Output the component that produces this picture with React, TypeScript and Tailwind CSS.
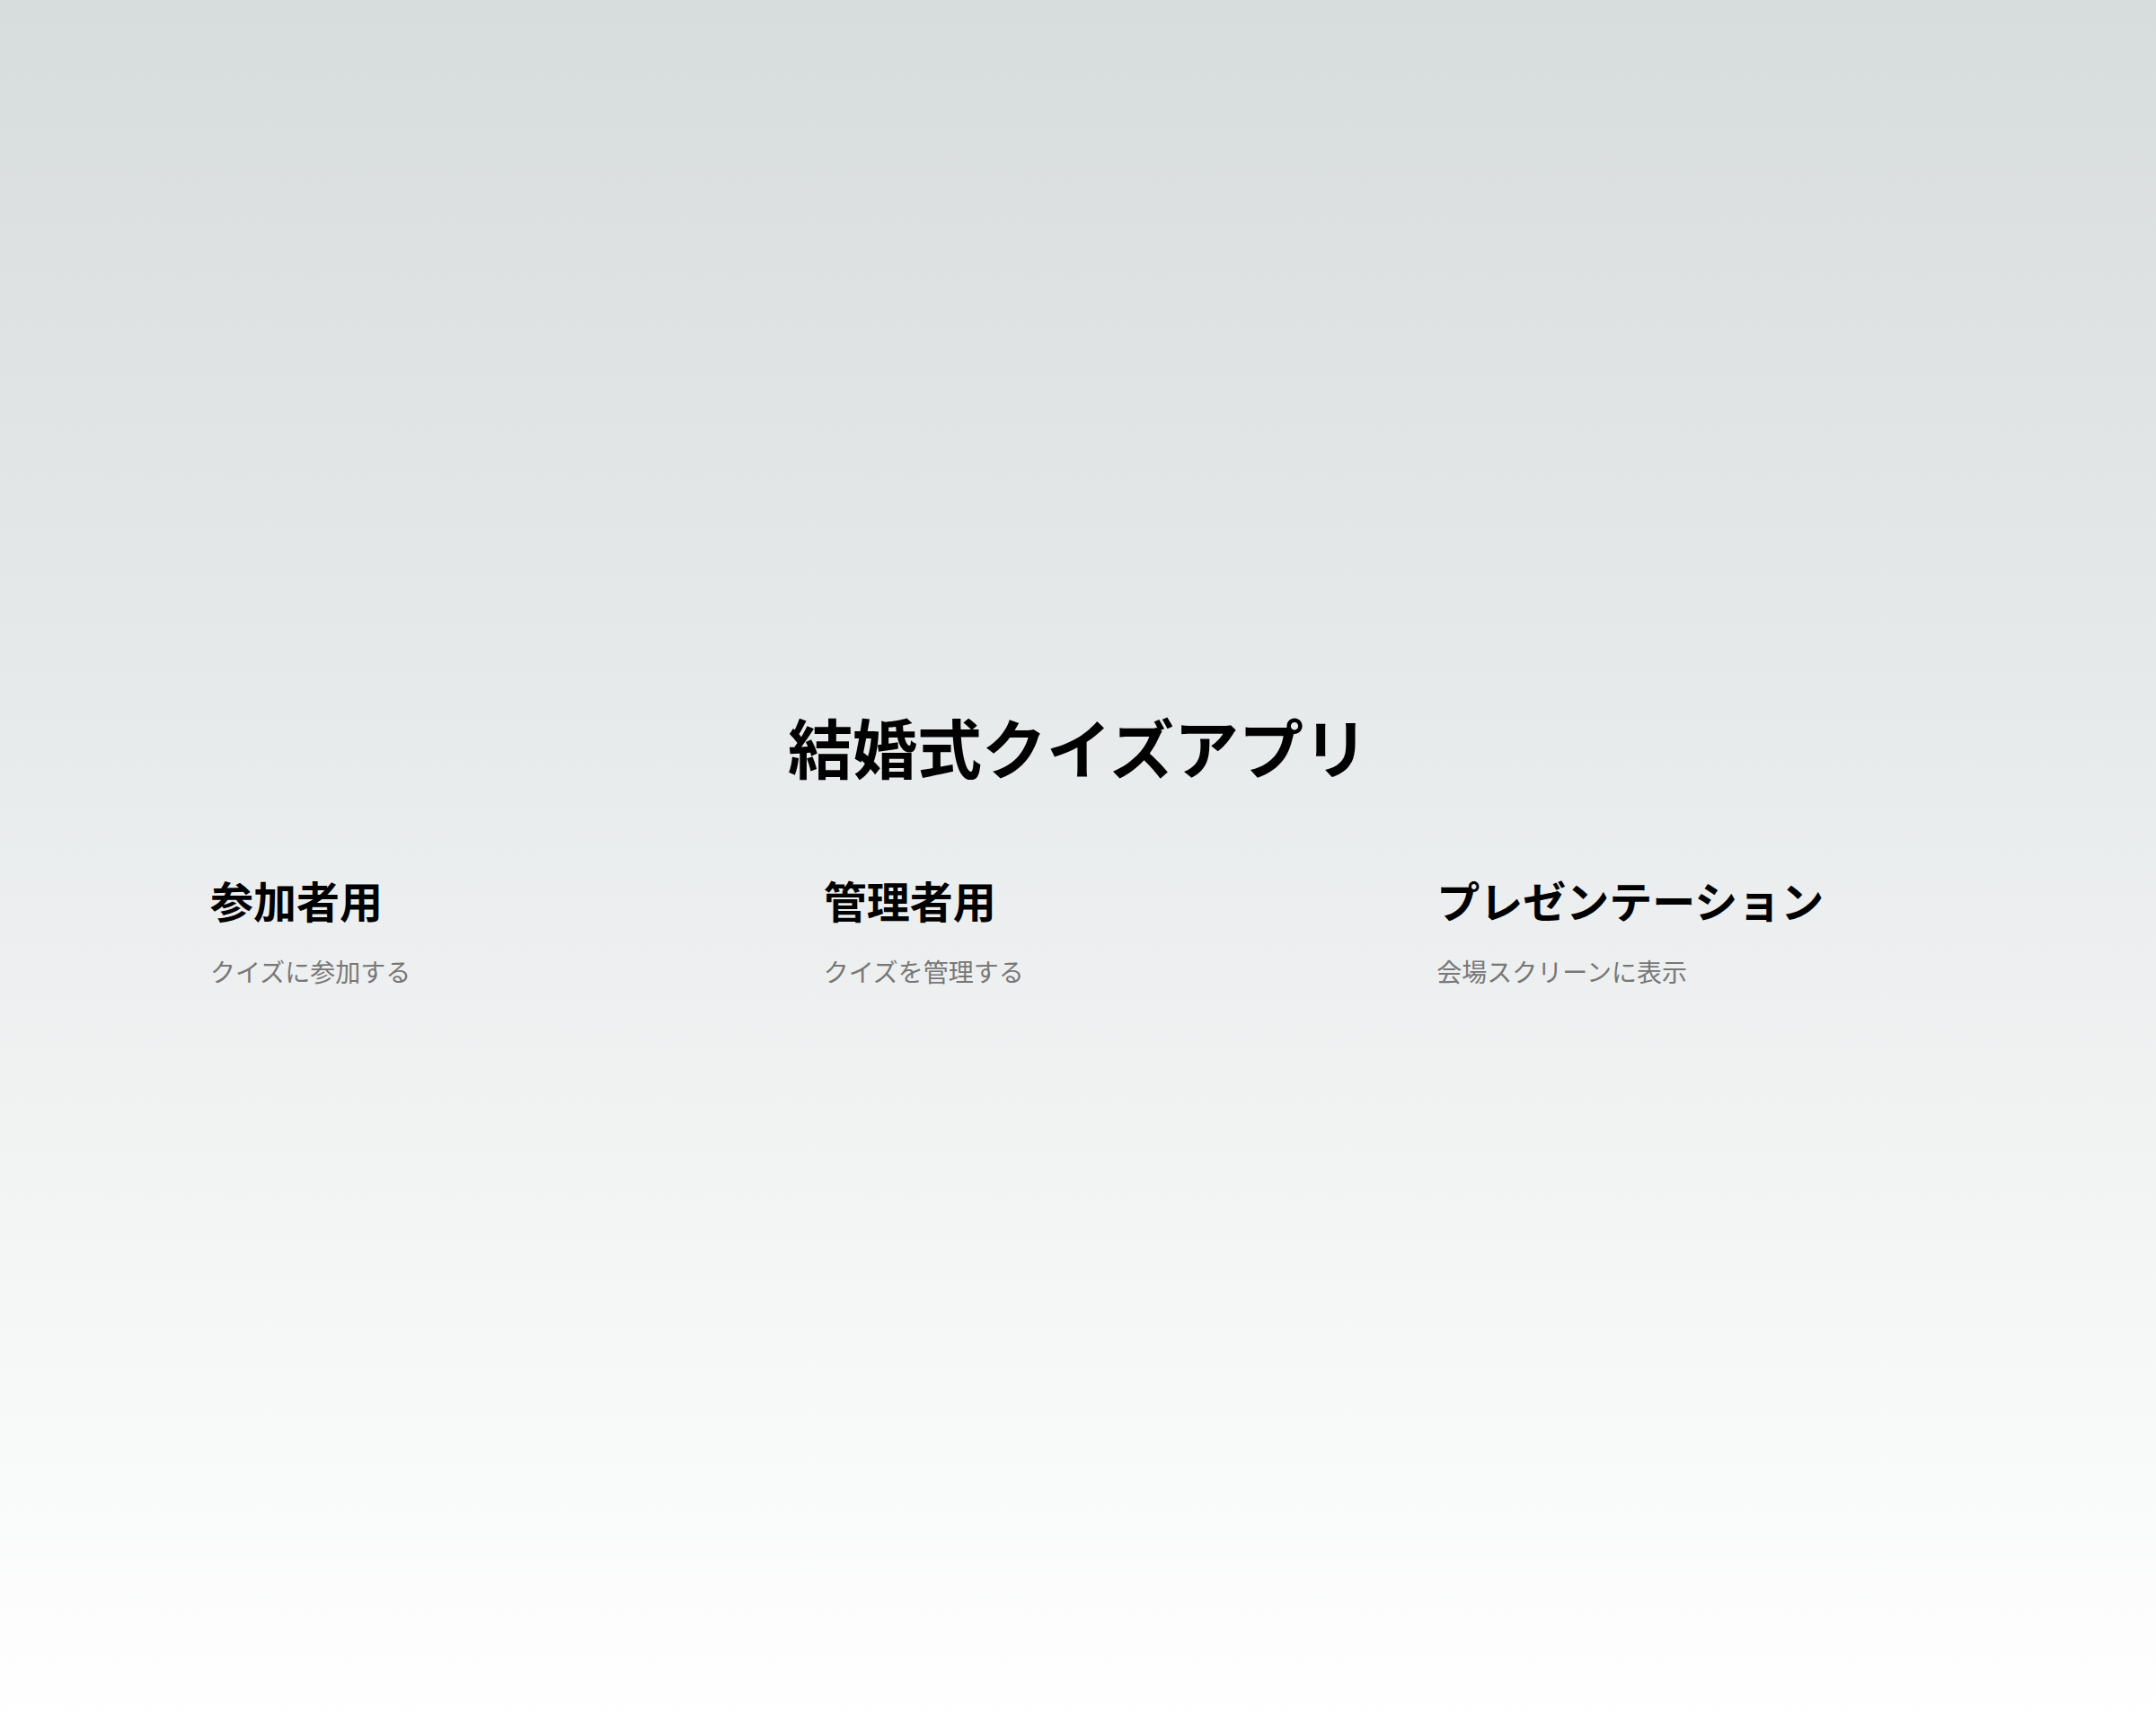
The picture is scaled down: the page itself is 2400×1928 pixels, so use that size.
import React from 'react';

const modes = [
  { title: '参加者用', desc: 'クイズに参加する' },
  { title: '管理者用', desc: 'クイズを管理する' },
  { title: 'プレゼンテーション', desc: '会場スクリーンに表示' },
];

const App = () => {
  return (
    <div
      className="min-h-screen w-full flex items-center justify-center bg-linear-to-b from-[#d7dcdd] to-white pb-[40px]"
      style={{ fontFamily: '"Noto Sans CJK JP", "Noto Sans", sans-serif' }}
    >
      <div className="w-[2048px] flex flex-col items-center">
        <h1 className="text-[72px] leading-none font-bold text-black">結婚式クイズアプリ</h1>

        <div className="mt-[111px] w-full grid grid-cols-3">
          {modes.map((m) => (
            <div key={m.title} className="px-[58px]">
              <h2 className="text-[48px] leading-none font-bold text-black">{m.title}</h2>
              <p className="mt-[42px] text-[28px] leading-none text-[#777777]">{m.desc}</p>
            </div>
          ))}
        </div>
      </div>
    </div>
  );
};

export default App;
